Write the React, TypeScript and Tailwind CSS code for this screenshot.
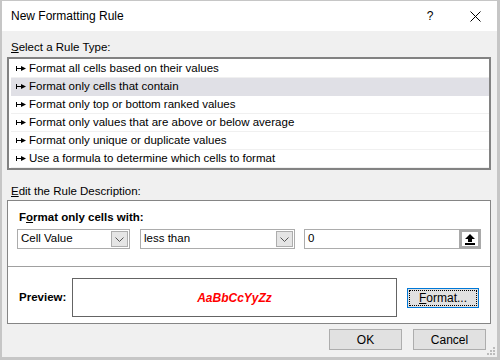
import React from "react";

const ruleTypes = [
  "Format all cells based on their values",
  "Format only cells that contain",
  "Format only top or bottom ranked values",
  "Format only values that are above or below average",
  "Format only unique or duplicate values",
  "Use a formula to determine which cells to format",
];

const RowArrow = () => (
  <svg width="11" height="7" viewBox="0 0 11 7" className="shrink-0">
    <rect x="0" y="1" width="1" height="5" fill="#000" />
    <rect x="0" y="3" width="6" height="1" fill="#000" />
    <polygon points="5,1 10,3.5 5,6" fill="#000" />
  </svg>
);

const Chevron = () => (
  <svg width="9" height="5" viewBox="0 0 9 5">
    <polyline points="0.5,0.5 4.5,4.5 8.5,0.5" fill="none" stroke="#555" strokeWidth="1" />
  </svg>
);

const Dropdown = ({ value, width }: { value: string; width: string }) => (
  <div className={`${width} h-[20px] bg-white border border-[#acacac] flex items-center pl-[3px] pr-[1px]`}>
    <span className="flex-1 truncate">{value}</span>
    <div className="w-[17px] h-[16px] bg-[#e5e5e5] border border-[#adadad] flex items-center justify-center">
      <Chevron />
    </div>
  </div>
);

const Btn = ({ children }: { children: React.ReactNode }) => (
  <button className="w-[73px] h-[21px] bg-[#e1e1e1] border border-[#adadad] flex items-center justify-center p-0 text-[12px]">
    {children}
  </button>
);

export default function App() {
  return (
    <div
      className="w-[500px] h-[360px] border-l-2 border-r-[3px] border-b-[3px] border-t border-[#c6c6c6] bg-[#f0f0f0] flex flex-col relative text-[11.5px] text-black overflow-hidden"
      style={{ fontFamily: '"Liberation Sans", Arial, sans-serif' }}
    >
      <div className="h-[30px] bg-white flex items-center pl-[9px] shrink-0 text-[12px]">
        <span className="flex-1">New Formatting Rule</span>
        <span className="w-[20px] text-center mr-[30px]">?</span>
        <svg width="11" height="11" viewBox="0 0 11 11" className="mr-[16px]">
          <path d="M0.5 0.5 L10.5 10.5 M10.5 0.5 L0.5 10.5" stroke="#000" strokeWidth="1" />
        </svg>
      </div>

      <div className="flex flex-col pl-[5px] pr-[6px]">
        <div className="mt-[8px] h-[16px] leading-[16px] pl-[4px]">
          <span className="underline">S</span>elect a Rule Type:
        </div>
        <div className="mt-[2px] h-[113px] bg-white border-2 border-[#828282] pt-[1px] pl-[2px] flex flex-col">
          {ruleTypes.map((t, i) => (
            <div
              key={t}
              className={`h-[18px] flex items-center gap-[2px] pl-[5px] border-b ${
                i === 1 ? "bg-[#e0e0e6] border-[#e0e0e6]" : "border-[#f0f0f0]"
              }`}
            >
              <RowArrow />
              <span>{t}</span>
            </div>
          ))}
        </div>

        <div className="mt-[13px] h-[16px] leading-[16px] pl-[4px]">
          <span className="underline">E</span>dit the Rule Description:
        </div>

        <div className="mt-[1px] h-[124px] bg-white border border-[#858585] pt-[8px] pb-[6px] flex flex-col">
          <div className="h-[16px] leading-[16px] pl-[11px] font-bold">
            F<span className="underline">o</span>rmat only cells with:
          </div>
          <div className="mt-[4px] flex items-center pl-[9px] gap-[10px]">
            <Dropdown value="Cell Value" width="w-[113px]" />
            <Dropdown value="less than" width="w-[155px]" />
            <div className="ml-[-1px] w-[177px] h-[20px] bg-white border border-[#acacac] flex items-center">
              <span className="flex-1 pl-[3px]">0</span>
              <div className="w-[22px] h-[20px] -mr-px border-[3px] border-[#a9a9a9] bg-white flex items-center justify-center">
                <svg width="10" height="11" viewBox="0 0 10 11">
                  <polygon points="5,0 10,5 7,5 7,8 3,8 3,5 0,5" fill="#000" />
                  <rect x="0" y="9" width="10" height="2" fill="#000" />
                </svg>
              </div>
            </div>
          </div>
          <div className="mt-[17px] h-px bg-[#a0a0a0]" />
          <div className="mt-[11px] flex items-center pl-[11px]">
            <span className="w-[53px] font-bold">Preview:</span>
            <div className="w-[325px] h-[39px] border border-[#646464] flex items-center justify-center text-[#ff0000] font-bold italic text-[12px]">
              AaBbCcYyZz
            </div>
            <div className="ml-[10px]">
              <button className="w-[72px] h-[20px] bg-[#e1e1e1] border border-[#0078d7] p-[1px] text-[12px]">
                <div className="w-full h-full border border-dotted border-black flex items-center justify-center">
                  <span>
                    <span className="underline">F</span>ormat...
                  </span>
                </div>
              </button>
            </div>
          </div>
        </div>

        <div className="mt-[5px] flex justify-end gap-[11px] pr-[5px]">
          <Btn>OK</Btn>
          <Btn>Cancel</Btn>
        </div>
      </div>

      <svg width="9" height="9" viewBox="0 0 9 9" className="absolute right-[1px] bottom-[1px]">
        {[
          [6, 0],
          [3, 3],
          [6, 3],
          [0, 6],
          [3, 6],
          [6, 6],
        ].map(([x, y]) => (
          <rect key={`${x}-${y}`} x={x} y={y} width="2" height="2" fill="#bcbcbc" />
        ))}
      </svg>
    </div>
  );
}
